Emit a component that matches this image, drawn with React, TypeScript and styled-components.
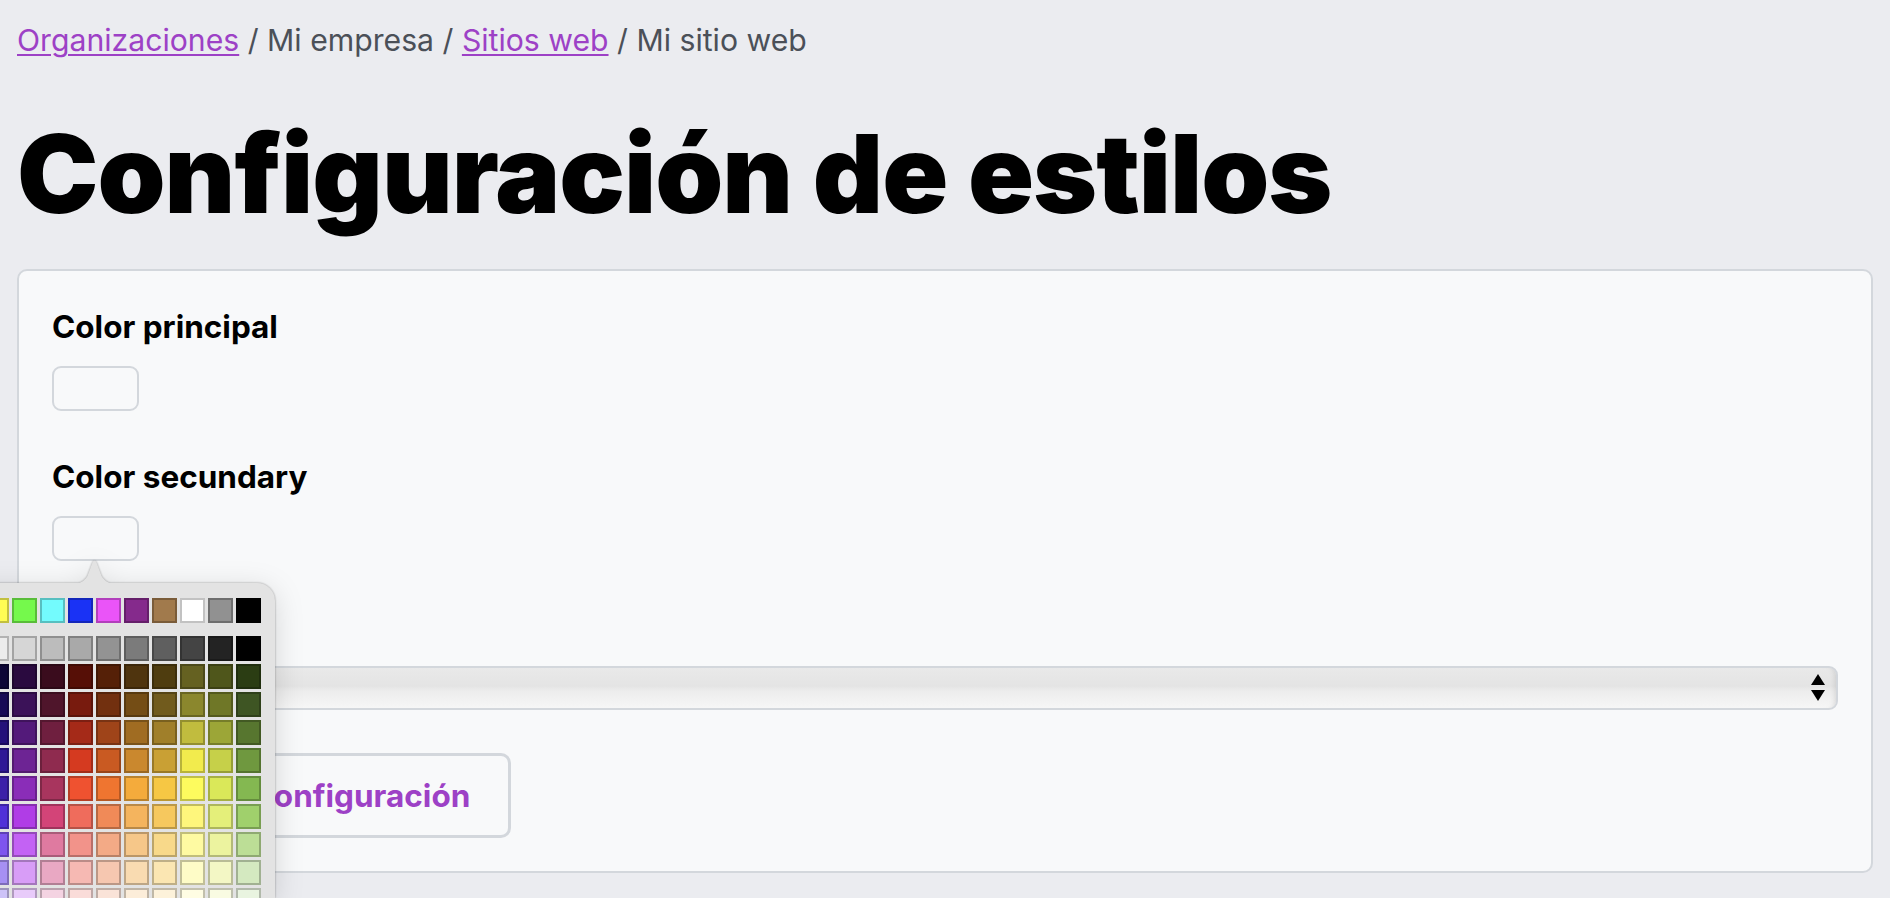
import React from "react";
import styled, { createGlobalStyle } from "styled-components";

const Global = createGlobalStyle`
  html, body {
    margin: 0;
    padding: 0;
    overflow: hidden;
    background: #ebecf0;
  }
  body {
    font-family: Inter, "Noto Sans", "Liberation Sans", sans-serif;
    color: #000;
  }
  * { box-sizing: border-box; }
`;

const Page = styled.div`
  padding: 23px 17px 0;
  height: 898px;
`;

const Breadcrumb = styled.nav`
  font-size: 30.2px;
  line-height: 34px;
  color: #4b5058;
  white-space: pre;
`;

const Crumb = styled.a`
  color: #9d41c6;
  text-decoration: underline;
  text-underline-offset: 3px;
  text-decoration-thickness: 2px;
  cursor: pointer;
`;

const Title = styled.h1`
  margin: 61px 0 0;
  font-size: 109px;
  line-height: 110px;
  font-weight: 900;
  letter-spacing: -1px;
`;

const Card = styled.section`
  margin-top: 41px;
  background: #f8f9fa;
  border: 2px solid #d3d7dc;
  border-radius: 10px;
  padding: 37px 33px 33px;
  display: flex;
  flex-direction: column;
`;

const Field = styled.div<{ $after: number }>`
  display: flex;
  flex-direction: column;
  align-items: flex-start;
  margin-bottom: ${(p) => p.$after}px;
`;

const Label = styled.label`
  font-size: 31.5px;
  line-height: 38px;
  font-weight: 700;
  margin-bottom: 20px;
`;

const Anchor = styled.div`
  position: relative;
`;

const ColorBox = styled.button`
  display: block;
  width: 87px;
  height: 45px;
  border: 2px solid #d3d7dc;
  border-radius: 9px;
  background: #f8f9fa;
  padding: 0;
`;

const SelectWrap = styled.div`
  position: relative;
  width: 100%;
`;

const Select = styled.select`
  appearance: none;
  width: 100%;
  height: 44px;
  border: 2px solid #d3d7dc;
  border-radius: 9px;
  background: linear-gradient(
    to bottom,
    #e9e9e9 0%,
    #e4e4e4 45%,
    #ededed 58%,
    #f6f6f6 100%
  );
  box-shadow: inset -6px 0 6px -6px rgba(0, 0, 0, 0.15);
  font-family: Inter, sans-serif;
  font-size: 22px;
  padding: 0 12px;
  color: #000;
`;

const Arrows = styled.svg`
  position: absolute;
  right: 12px;
  top: 8px;
  pointer-events: none;
`;

const SaveButton = styled.button`
  align-self: flex-start;
  height: 85px;
  padding: 0 38px 0 34px;
  border: 3px solid #d3d7dc;
  border-radius: 10px;
  background: #f8f9fa;
  color: #9d41c6;
  font-family: Inter, sans-serif;
  font-size: 31.5px;
  font-weight: 700;
`;

const Popover = styled.div`
  position: absolute;
  top: 67px;
  left: -137px;
  width: 360px;
  filter: drop-shadow(0 0 1px rgba(0, 0, 0, 0.35))
    drop-shadow(0 6px 14px rgba(0, 0, 0, 0.14));
  z-index: 5;
`;

const Beak = styled.svg`
  position: absolute;
  top: -23px;
  left: 157px;
  display: block;
`;

const Panel = styled.div`
  background: #e3e3e3;
  border-radius: 18px 18px 0 0;
  padding: 15px 13px 0 13px;
  height: 315px;
  overflow: hidden;
`;

const SwatchRow = styled.div`
  display: grid;
  grid-template-columns: repeat(12, 25px);
  grid-auto-rows: 25px;
  gap: 3px;
`;

const Grid = styled.div`
  margin-top: 13px;
  display: grid;
  grid-template-columns: repeat(12, 25px);
  grid-auto-rows: 25px;
  gap: 3px;
`;

const Swatch = styled.div<{ $c: string }>`
  background: ${(p) => p.$c};
  box-shadow: inset 0 0 0 2px rgba(0, 0, 0, 0.24);
`;

const topRow = [
  "#eb4e3d",
  "#f19a38",
  "#fffd54",
  "#75f94c",
  "#73fbfd",
  "#1a32f5",
  "#ea54f8",
  "#852a8c",
  "#a17a4c",
  "#ffffff",
  "#919191",
  "#000000",
];

const grayRow = [
  "#ffffff",
  "#f6f6f6",
  "#ececec",
  "#d6d6d6",
  "#bcbcbc",
  "#a9a9a9",
  "#939393",
  "#7b7b7b",
  "#5f5f5f",
  "#444444",
  "#232323",
  "#000000",
];

const colorRows = [
  ["#00374a", "#011d57", "#0d0636", "#2a0a3f", "#3a0c1d", "#560f06", "#552007", "#4f340e", "#4f3d0f", "#656121", "#4f561b", "#2b3d13"],
  ["#004d65", "#012f7b", "#170a56", "#3b1258", "#4f152b", "#781b0e", "#72300f", "#744d15", "#715b1d", "#8b872d", "#6f7727", "#3e5523"],
  ["#016e8f", "#0042a9", "#24117a", "#531a7a", "#6f1f3f", "#a52a18", "#9f4419", "#a06c22", "#a07f2a", "#c1bc3e", "#9ca637", "#57762f"],
  ["#008cb4", "#0056d6", "#2f1896", "#6d2494", "#8f2b4f", "#d53a20", "#c95a22", "#ca882e", "#c9a034", "#f2eb4d", "#c6d049", "#6f983f"],
  ["#00a1d8", "#0061fe", "#3c20a8", "#8a2db8", "#a8355e", "#ef5230", "#ef7530", "#f4ab3c", "#f6c744", "#fdfb5e", "#dae859", "#84b851"],
  ["#01c7fc", "#3a87fe", "#5030d8", "#b03de6", "#d34478", "#ef6c5c", "#f08a58", "#f4b45e", "#f6c85e", "#fef67c", "#e4ef7a", "#a0d06c"],
  ["#52d6fc", "#74a7ff", "#7e55ee", "#c362f4", "#df7aa0", "#f2938a", "#f3aa86", "#f6c789", "#f8d98a", "#fefaa2", "#ecf39f", "#bcde96"],
  ["#93e3fc", "#a7c6ff", "#a690f3", "#d89df7", "#e9a8c3", "#f6b9b3", "#f6c7b0", "#f9dbb1", "#fbe6b2", "#fefcc7", "#f3f7c5", "#d4e9c0"],
  ["#cbf0ff", "#d3e2ff", "#cdc3f8", "#e8cbfa", "#f4d3e2", "#fadcd9", "#fae3d8", "#fcedd9", "#fdf2da", "#fffde3", "#f9fbe2", "#e9f4e0"],
];

function ColorPopover() {
  return (
    <Popover>
      <Beak width="45" height="24" viewBox="0 0 45 24">
        <path
          d="M0 24 C8 24 12 21.5 15.5 16 L20.6 2.2 Q22.5 -0.6 24.4 2.2 L29.5 16 C33 21.5 37 24 45 24 Z"
          fill="#e3e3e3"
        />
      </Beak>
      <Panel>
        <SwatchRow>
          {topRow.map((c, i) => (
            <Swatch key={i} $c={c} />
          ))}
        </SwatchRow>
        <Grid>
          {grayRow.map((c, i) => (
            <Swatch key={"g" + i} $c={c} />
          ))}
          {colorRows.flatMap((row, r) =>
            row.map((c, i) => <Swatch key={r + "-" + i} $c={c} />)
          )}
        </Grid>
      </Panel>
    </Popover>
  );
}

export default function App() {
  return (
    <>
      <Global />
      <Page>
        <Breadcrumb>
          <Crumb>Organizaciones</Crumb>
          {" / Mi empresa / "}
          <Crumb>Sitios web</Crumb>
          {" / Mi sitio web"}
        </Breadcrumb>
        <Title>Configuración de estilos</Title>
        <Card>
          <Field $after={47}>
            <Label>Color principal</Label>
            <ColorBox aria-label="Color principal" />
          </Field>
          <Field $after={47}>
            <Label>Color secundary</Label>
            <Anchor>
              <ColorBox aria-label="Color secundary" />
              <ColorPopover />
            </Anchor>
          </Field>
          <Field $after={43}>
            <Label>Tipografía</Label>
            <SelectWrap>
              <Select defaultValue="Inter">
                <option>Inter</option>
                <option>Roboto</option>
                <option>Lato</option>
              </Select>
              <Arrows width="16" height="28" viewBox="0 0 16 28">
                <path d="M8 0 L15 11 L1 11 Z" fill="#000" />
                <path d="M1 16 L15 16 L8 27 Z" fill="#000" />
              </Arrows>
            </SelectWrap>
          </Field>
          <SaveButton>Guardar la configuración</SaveButton>
        </Card>
      </Page>
    </>
  );
}
